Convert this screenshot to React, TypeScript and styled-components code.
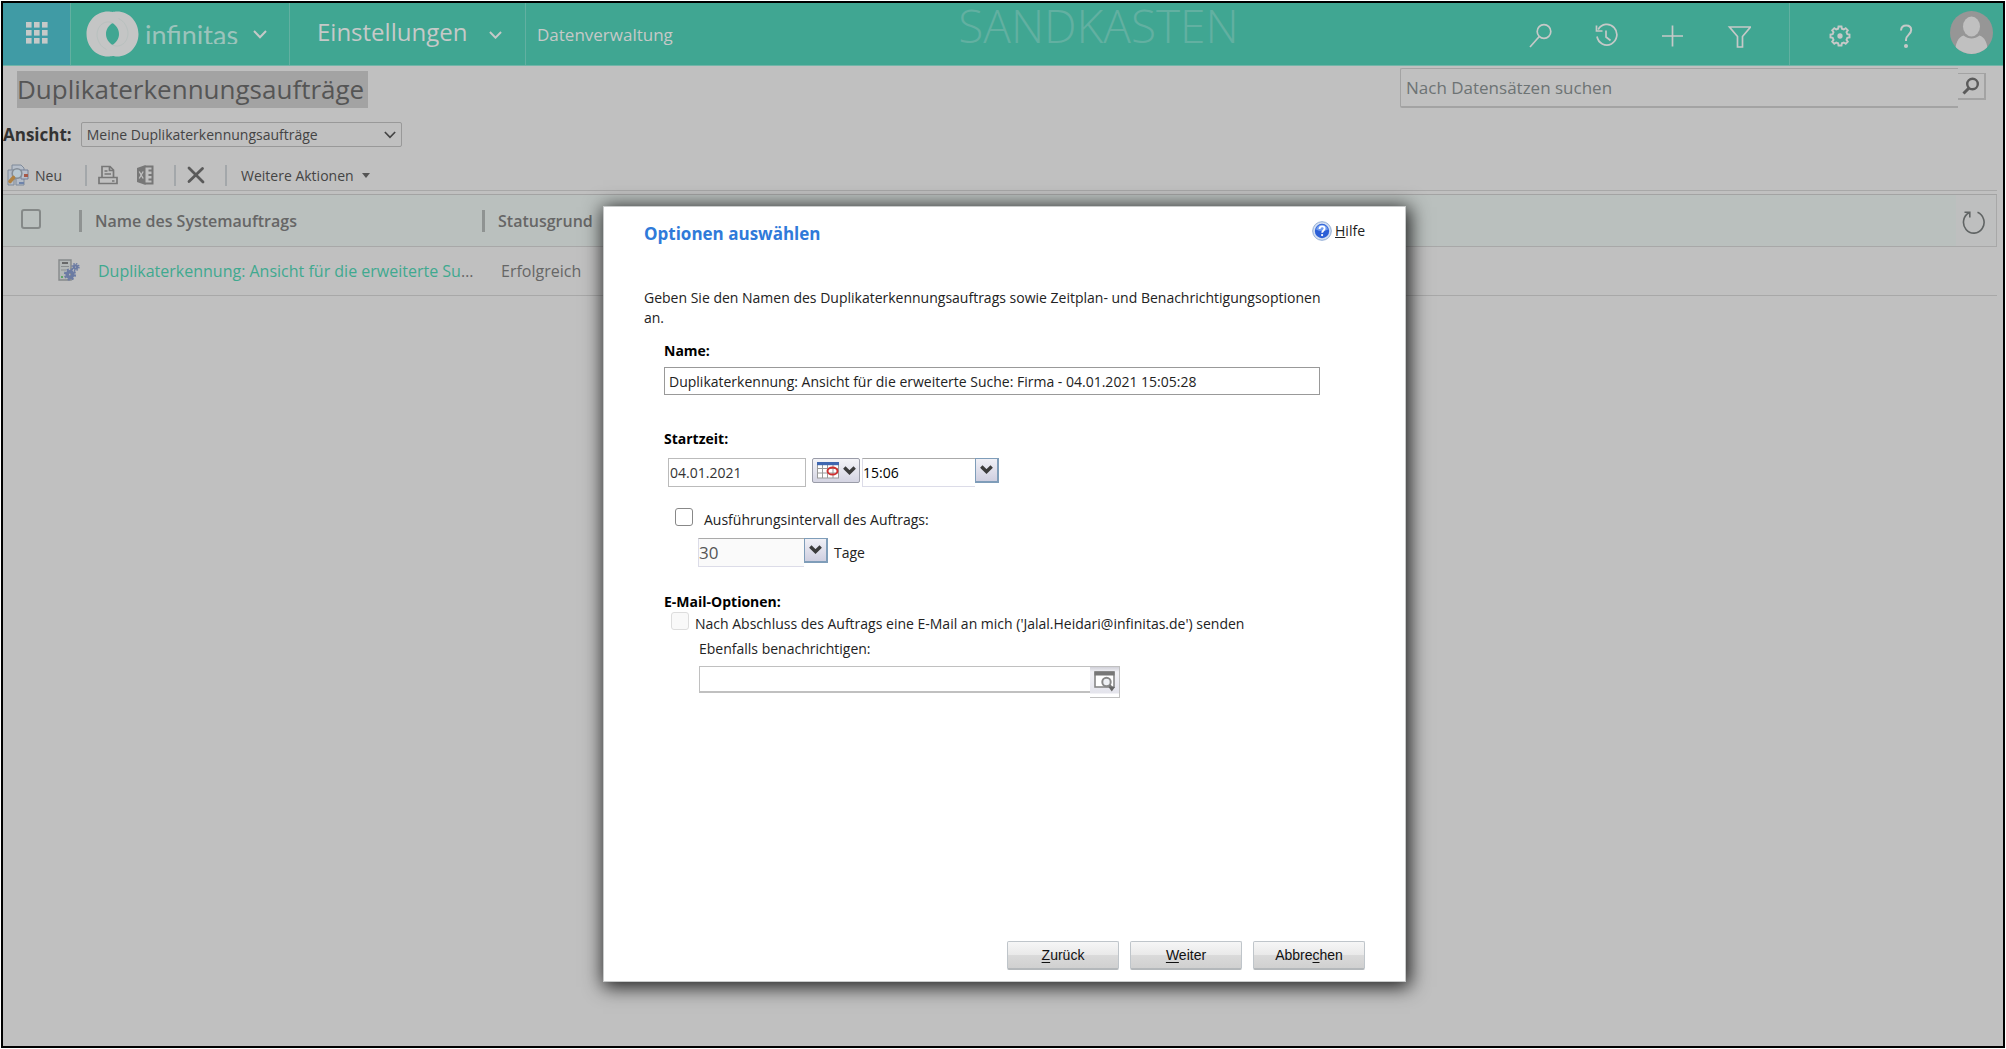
import React from 'react';
import styled, { createGlobalStyle } from 'styled-components';

const GlobalStyle = createGlobalStyle`
  *, *::before, *::after { box-sizing: border-box; }
  body { margin: 0; background: #fff; }
  body, button, input, select { font-family: "Open Sans", "Noto Sans", sans-serif; }
  button { margin: 0; padding: 0; border: 0; background: none; color: inherit; cursor: pointer; }
  svg { display: block; flex: none; }
`;

const Page = styled.div`
  padding: 1px;
`;

const Frame = styled.div`
  display: flex;
  flex-direction: column;
  min-height: calc(100vh - 2px);
  border: 2px solid #000;
  background: #c0c0c0;
  color: #444;
  font-size: 14px;
`;

/* ---------- top navigation ---------- */

const TopBar = styled.header`
  display: flex;
  height: 63px;
  border-bottom: 1px solid #72b5a8;
  background: #40a692;
  color: #c6c9c8;
`;

const WaffleButton = styled.button`
  display: flex;
  align-items: center;
  justify-content: center;
  width: 68px;
  padding-bottom: 2px;
  border-right: 1px solid #62b0a1;
  background: #409ba5;
`;

const Brand = styled.button`
  display: flex;
  align-items: center;
  gap: 6px;
  width: 219px;
  padding-left: 15px;
  border-right: 1px solid #62b0a1;
`;

const Wordmark = styled.span`
  width: 96px;
  height: 22px;
  margin-bottom: 3px;
  overflow: hidden;
  color: #9cc3bb;
  font: 400 27px/26px Lato, sans-serif;
  text-align: left;
`;

const AreaButton = styled.button`
  display: flex;
  align-items: center;
  gap: 22px;
  width: 236px;
  padding: 0 0 6px 27px;
  border-right: 1px solid #62b0a1;
  font-size: 24px;
`;

const BrandChevron = styled.span`
  padding-left: 6px;
`;

const AreaChevron = styled.span`
  padding-top: 8px;
`;

const SubArea = styled.a`
  display: flex;
  align-items: center;
  padding-left: 11px;
  color: inherit;
  font-size: 17px;
  text-decoration: none;
`;

const Sandbox = styled.div`
  flex: 1;
  padding-left: 16px;
  color: #62b0a1;
  font-size: 46px;
  font-weight: 300;
  line-height: 44px;
  text-align: center;
`;

const Tools = styled.div<{ $divided?: boolean }>`
  display: flex;
  padding: ${(p) => (p.$divided ? '0 0 0 17px' : '0 17px 0 0')};
  border-left: ${(p) => (p.$divided ? '1px solid #62b0a1' : '0')};
`;

const ToolButton = styled.button`
  display: flex;
  align-items: center;
  justify-content: center;
  width: 66px;
  padding-top: 3px;
`;

const Avatar = styled.button`
  align-self: center;
  width: 43px;
  height: 43px;
  margin: 0 10px 3px 11px;
  border-radius: 50%;
  overflow: hidden;
`;

/* ---------- list page ---------- */

const TitleRow = styled.div`
  display: flex;
  align-items: flex-start;
  justify-content: space-between;
  padding: 2px 17px 0 14px;
`;

const Title = styled.h1`
  margin: 3px 0 0;
  padding-right: 4px;
  background: #a3a3a3;
  color: #555;
  font-size: 26px;
  font-weight: 400;
  line-height: 37px;
`;

const Search = styled.form`
  display: flex;
  align-items: flex-start;
  flex: 0 1 586px;
`;

const SearchInput = styled.input`
  flex: 1;
  min-width: 0;
  height: 40px;
  padding: 0 5px;
  border: solid #a3a3a3;
  border-width: 1px 0 2px 1px;
  border-radius: 2px 0 0 2px;
  background: transparent;
  color: #6d7374;
  font-size: 17px;
  &::placeholder { color: #6d7374; opacity: 1; }
`;

const SearchButton = styled.button`
  display: flex;
  align-items: center;
  justify-content: center;
  width: 28px;
  height: 27px;
  margin-top: 5px;
  border: solid #a3a3a3;
  border-width: 1px 2px 2px 0;
`;

const ViewRow = styled.div`
  display: flex;
  align-items: center;
  gap: 9px;
  margin-top: 14px;
`;

const ViewLabel = styled.label`
  color: #333;
  font-size: 17px;
  font-weight: 700;
  line-height: 25px;
`;

const ViewPicker = styled.div`
  display: grid;
  align-items: center;
  width: 321px;
  > * { grid-area: 1 / 1; }
  > svg { justify-self: end; margin-right: 6px; pointer-events: none; }
`;

const ViewSelect = styled.select`
  appearance: none;
  width: 100%;
  height: 25px;
  padding: 0 5px;
  border: 1px solid #999;
  border-radius: 2px;
  background: transparent;
  color: #444;
  font-size: 14px;
`;

const Toolbar = styled.div`
  display: flex;
  align-items: center;
  height: 31px;
  margin: 13px 6px 3px 0;
  padding-left: 4px;
  border-bottom: 1px solid #a8a8a8;
`;

const ToolbarButton = styled.button<{ $gap?: number }>`
  display: flex;
  align-items: center;
  gap: 6px;
  margin-right: ${(p) => p.$gap || 0}px;
  color: #444;
  font-size: 14px;
`;

const Separator = styled.span<{ $after: number }>`
  width: 2px;
  height: 21px;
  margin-right: ${(p) => p.$after}px;
  background: #a3a7aa;
`;

const Caret = styled.span`
  margin-left: 2px;
  border: solid transparent;
  border-width: 5px 4px 0;
  border-top-color: #555;
`;

const Grid = styled.table`
  width: calc(100% - 6px);
  border-collapse: separate;
  border-spacing: 0;
  table-layout: fixed;
  border-top: 1px solid #a3a3a3;
  th, td { padding: 0; text-align: left; font-weight: 400; border-bottom: 1px solid #a8a8a8; }
`;

const HeadRow = styled.tr`
  height: 52px;
  background: #bac0be;
`;

const BodyRow = styled.tr`
  height: 49px;
`;

const SelectColumn = styled.col`
  width: 76px;
`;

const NameColumn = styled.col`
  width: 403px;
`;

const RefreshColumn = styled.col`
  width: 41px;
`;

const ColumnTitle = styled.span`
  display: block;
  padding-left: 13px;
  border-left: 3px solid #8f9392;
  color: #666;
  font-size: 16px;
  font-weight: 600;
  line-height: 22px;
`;

const TextCell = styled.td`
  && { padding: 0 5px 0 19px; }
  overflow: hidden;
  color: #666;
  font-size: 16px;
  text-overflow: ellipsis;
  white-space: nowrap;
`;

const RecordLink = styled.a`
  color: #3fa98f;
  text-decoration: none;
`;

const IconCell = styled.td`
  > svg { margin: 0 0 3px 55px; }
`;

const RefreshCell = styled.th`
  background: #bebfbf;
  border-right: 1px solid #a8a8a8;
`;

const RefreshButton = styled.button`
  display: block;
  margin: 2px 0 0 6px;
`;

const HeadCheck = styled.input`
  appearance: none;
  display: block;
  width: 20px;
  height: 20px;
  margin: 0 0 4px 18px;
  border: 2px solid #858988;
  border-radius: 3px;
`;

/* ---------- dialog ---------- */

const Overlay = styled.div`
  position: absolute;
  inset: 0;
  display: flex;
  align-items: flex-start;
  justify-content: center;
  padding: 206px 0 0 3px;
`;

const Dialog = styled.section`
  display: flex;
  flex-direction: column;
  width: 803px;
  min-height: 776px;
  padding: 14px 40px 11px 40px;
  border: 1px solid #c9cbcb;
  background: #fff;
  box-shadow: 2px 3px 18px 2px rgba(0, 0, 0, 0.85);
  color: #222;
  font-size: 14px;
  line-height: 20px;
`;

const DialogHead = styled.div`
  display: flex;
  align-items: flex-start;
  justify-content: space-between;
`;

const DialogTitle = styled.h2`
  margin: 0;
  color: #2f7ad9;
  font-size: 17px;
  font-weight: 700;
  line-height: 26px;
`;

const HelpLink = styled.a`
  display: flex;
  align-items: center;
  gap: 3px;
  color: #222;
  text-decoration: none;
`;

const Intro = styled.p`
  max-width: 690px;
  margin: 41px 0 0;
`;

const Fields = styled.form`
  margin: 13px 45px 0 20px;
`;

const Caption = styled.label`
  display: block;
  color: #000;
  font-weight: 700;
`;

const Group = styled.div<{ $top: number; $indent?: number }>`
  display: flex;
  margin-top: ${(p) => p.$top}px;
  padding-left: ${(p) => p.$indent || 0}px;
`;

const CenteredGroup = styled(Group)`
  align-items: center;
`;

const TextInput = styled.input`
  flex: 1;
  min-width: 0;
  height: 28px;
  padding: 0 4px;
  border: 1px solid #999;
  border-radius: 0;
  background: #fff;
  color: #222;
  font-size: 14px;
`;

const DateInput = styled.input`
  width: 138px;
  height: 29px;
  padding: 0 1px;
  border: 1px solid #bbb;
  border-radius: 0;
  color: #333;
  font-size: 14px;
`;

const CalendarButton = styled.button`
  display: flex;
  align-items: center;
  justify-content: center;
  gap: 4px;
  width: 48px;
  height: 25px;
  margin: 0 2px 0 6px;
  border: 1px solid #9a9ca8;
  border-radius: 2px;
  background: linear-gradient(#f4f4f8, #d4d4e2);
`;

const Combo = styled.div<{ $width: number }>`
  display: grid;
  width: ${(p) => p.$width}px;
  > * { grid-area: 1 / 1; }
`;

const ComboSelect = styled.select`
  appearance: none;
  width: calc(100% - 24px);
  height: 29px;
  padding: 0;
  border: solid #dcdce8;
  border-width: 1px 0 1px 1px;
  border-top-color: #aaa;
  border-radius: 0;
  background: #fff;
  color: #000;
  font-size: 14px;
  font-weight: 500;
  opacity: 1;
  &:disabled { background: #fafafa; color: #555; font-size: 17px; font-weight: 400; }
`;

const ComboArrow = styled.span`
  display: flex;
  align-items: center;
  justify-content: center;
  justify-self: end;
  width: 24px;
  height: 25px;
  border: 2px solid #7f9db9;
  border-width: 1px 2px 2px 1px;
  background: linear-gradient(#f0f0f6, #cfcfe0);
  pointer-events: none;
`;

const Unit = styled.span`
  padding-left: 6px;
`;

const Check = styled.input`
  appearance: none;
  flex: none;
  align-self: flex-start;
  width: 18px;
  height: 18px;
  margin: 0;
  border: 1px solid #888;
  border-radius: 3px;
  background: #fff;
  &:disabled { border-color: #ddd; background: #f9f9f9; }
`;

const CheckLabel = styled.label<{ $gap: number }>`
  padding: 2px 0 0 ${(p) => p.$gap}px;
  white-space: nowrap;
`;

const FieldLabel = styled.label`
  display: block;
  margin-top: 5px;
  padding-left: 35px;
`;

const LookupInput = styled.input`
  width: 391px;
  height: 27px;
  padding: 0 4px;
  border: solid #c0c0c0;
  border-width: 1px 0 2px 1px;
  border-radius: 0;
  font-size: 14px;
`;

const LookupButton = styled.button`
  display: flex;
  align-items: flex-start;
  justify-content: center;
  width: 30px;
  height: 32px;
  padding-top: 4px;
  border: solid #c0c0c0;
  border-width: 1px 1px 1px 0;
  background: linear-gradient(#d0d0d8, #f2f2f6 5px, #e4e4ec 26px, #fff 27px);
`;

const Actions = styled.div`
  display: flex;
  justify-content: flex-end;
  gap: 11px;
  margin-top: auto;
`;

const ActionButton = styled.button`
  width: 112px;
  height: 29px;
  border: 1px solid #bfc5ca;
  border-bottom: 2px solid #b4b8bb;
  border-radius: 2px;
  background: linear-gradient(#f6f6f6, #e9e9e9 50%, #dadada 51%, #d0d0d0);
  color: #111;
  font: 14px "Liberation Sans", Arial, sans-serif;
  text-underline-offset: 2px;
`;

/* ---------- icons ---------- */

const Chevron = ({ size = 14, width = 2 }: { size?: number; width?: number }) => (
  <svg width={size} height={size / 2 + 2} viewBox="0 0 14 9" fill="none" stroke="currentColor" strokeWidth={width}>
    <path d="M1 1l6 6.2L13 1" />
  </svg>
);

const BoldChevron = () => (
  <svg width="13" height="10" viewBox="0 0 13 10" fill="none" stroke="#3c3c3c" strokeWidth="3.4">
    <path d="M1.3 1.6l5.2 5 5.2-5" />
  </svg>
);

const WaffleIcon = () => (
  <svg width="22" height="22" viewBox="0 0 22 22" fill="#c6c9c8">
    {[0, 8, 16].map((y) => [0, 8, 16].map((x) => <rect key={`${x}-${y}`} x={x} y={y} width="5.6" height="5.6" />))}
  </svg>
);

const RingLogo = () => (
  <svg width="53" height="46" viewBox="0 0 53 46">
    <path
      fill="#c4c5c5"
      fillRule="evenodd"
      d="M22 .5c2 0 3.200.2 4.500.5 1.300-.3 2.500-.5 4.500-.5 12 0 21.500 10 21.500 22.500S43 45.500 31 45.500c-2 0-3.200-.2-4.500-.5-1.300.3-2.500.5-4.500.5C10 45.500.5 35.500.5 23S10 .5 22 .5zM26.500 12c-4 2.500-6.500 6.500-6.500 11s2.500 8.500 6.500 11c4-2.500 6.500-6.500 6.500-11s-2.500-8.500-6.500-11z"
    />
    <path
      d="M26.500 12c-6.500-3.500-15 1.500-15.500 11 0 7 4 13 9.500 15.500M26.500 34c6.500 3.500 15-1.500 15.500-11 0-7-4-13-9.500-15.500"
      fill="none"
      stroke="#b9c1bf"
      strokeWidth="1"
    />
  </svg>
);

const LineIcon = ({ children }: { children: React.ReactNode }) => (
  <svg width="24" height="26" viewBox="0 0 24 26" fill="none" stroke="#c6c9c8" strokeWidth="1.7">
    {children}
  </svg>
);

const SearchIcon = () => (
  <LineIcon>
    <circle cx="15" cy="8.500" r="6.800" />
    <path d="M10.300 13.500L1 24" />
  </LineIcon>
);

const HistoryIcon = () => (
  <LineIcon>
    <path d="M3.200 6.500A10 10.300 0 1 1 2 13.500" />
    <path d="M1.500 2.500v5.500h6M11 7.500v6.500l4.500 3.500" />
  </LineIcon>
);

const PlusIcon = () => (
  <LineIcon>
    <path d="M11.500 2.500v21M1 13h21" />
  </LineIcon>
);

const FilterIcon = () => (
  <LineIcon>
    <path d="M2.500 4h21l-8 9.500V24h-5V13.500z" />
  </LineIcon>
);

const GearIcon = () => (
  <LineIcon>
    <path
      d="M10.500 3.500h3l.4 2.200 1.900.8 1.900-1.300 2.100 2.100-1.300 1.900.8 1.900 2.200.4v3l-2.200.4-.8 1.900 1.300 1.900-2.100 2.100-1.900-1.300-1.900.8-.4 2.200h-3l-.4-2.200-1.900-.8-1.900 1.300-2.100-2.100 1.300-1.900-.8-1.900-2.200-.4v-3l2.200-.4.8-1.900-1.300-1.900 2.100-2.100 1.900 1.300 1.900-.8z"
      strokeWidth="1.900"
    />
    <circle cx="12" cy="13" r="1.800" fill="#c6c9c8" />
  </LineIcon>
);

const HelpIcon = () => (
  <LineIcon>
    <path d="M7 7.500c.2-3.200 2.300-5 5.200-5 3 0 5 1.800 5 4.500 0 4.500-5.200 4.800-5.200 9.800v1.200" strokeWidth="2" />
    <circle cx="12" cy="23" r="1.200" fill="#c6c9c8" />
  </LineIcon>
);

const PersonIcon = () => (
  <svg width="43" height="43" viewBox="0 0 43 43">
    <rect width="43" height="43" fill="#969696" />
    <ellipse cx="21.500" cy="15.500" rx="8.500" ry="10" fill="#c0c0c0" />
    <path d="M5 43c0-11 3.500-17 8.500-18.500 5 4 11 4 16 0C34.500 26 38 32 38 43z" fill="#c0c0c0" />
  </svg>
);

const MagnifierIcon = () => (
  <svg width="18" height="18" viewBox="0 0 18 18" fill="none" stroke="#5b5b5b" strokeWidth="2.400">
    <circle cx="10.500" cy="7" r="5.300" />
    <path d="M7 11L1.500 16.500" strokeWidth="3" />
  </svg>
);

const NewJobIcon = () => (
  <svg width="22" height="22" viewBox="0 0 22 22">
    <path d="M5 1h9l3 3v11H5z" fill="#b7bfca" stroke="#7f8a9a" />
    <path d="M1 6h6v15H1zM9 12h8v9H9z" fill="#b4bcc8" stroke="#7f8a9a" />
    <path d="M14 6h7v9h-7z" fill="#b9c0cb" stroke="#74809a" />
    <path d="M17 10h4v3h-4z" fill="#a65a4a" />
    <path d="M12 18h5v2h-5z" fill="#6f84ab" />
    <circle cx="10" cy="9.500" r="4.800" fill="#b8c8d2" stroke="#858d96" strokeWidth="1.600" />
    <path d="M6.500 13.500L3 17.500" stroke="#b08243" strokeWidth="3.600" strokeLinecap="round" />
  </svg>
);

const PrintIcon = () => (
  <svg width="20" height="20" viewBox="0 0 20 20" fill="none" stroke="#777" strokeWidth="1.700">
    <path d="M4 12V1.500h8l3.500 3.500v7M1 12.500h18v6H1zM11.500 2v3.500H15M6.500 6h3M6.500 9h6.500M14 16h2.500" />
  </svg>
);

const ExcelIcon = () => (
  <svg width="18" height="20" viewBox="0 0 18 20">
    <path d="M9 1.500h7.500v17H9" fill="none" stroke="#777" strokeWidth="2" />
    <path d="M12.500 5.500h4M12.500 10h4M12.500 14.500h4" stroke="#777" strokeWidth="2" />
    <path d="M9.500 0v20L1 17V3z" fill="#777" />
    <path d="M3.200 6.500l4 7M7.200 6.500l-4 7" stroke="#c0c0c0" strokeWidth="1.300" />
  </svg>
);

const DeleteIcon = () => (
  <svg width="18" height="18" viewBox="0 0 18 18" stroke="#5a5a5a" strokeWidth="2.800" strokeLinecap="round">
    <path d="M2 2l14 14M15.500 2.500L2 15.500" />
  </svg>
);

const JobIcon = () => (
  <svg width="22" height="22" viewBox="0 0 22 22">
    <path d="M1 1h12v20H1z" fill="#b4b9b8" stroke="#85898a" strokeWidth="1.400" />
    <path d="M4 4h6" stroke="#555" strokeWidth="1.600" />
    <path d="M3 7.500h8M3 11h5" stroke="#8b8f90" strokeWidth="1.200" />
    <path d="M3 18h2" stroke="#5da568" strokeWidth="2" />
    <circle cx="12" cy="15.500" r="2.800" fill="none" stroke="#6b7ba3" strokeWidth="3.400" />
    <circle cx="12" cy="15.500" r="5.100" fill="none" stroke="#6b7ba3" strokeWidth="2" strokeDasharray="2.200 1.800" />
    <circle cx="17.500" cy="8" r="1.700" fill="none" stroke="#6b7ba3" strokeWidth="2.200" />
    <circle cx="17.500" cy="8" r="3.400" fill="none" stroke="#6b7ba3" strokeWidth="1.500" strokeDasharray="1.500 1.170" />
  </svg>
);

const RefreshIcon = () => (
  <svg width="24" height="26" viewBox="0 0 24 26" fill="none" stroke="#606464" strokeWidth="1.600">
    <path d="M15.500 3.300A10.300 10.800 0 1 1 7 3.800M2.500 3.200h5.300v5.300" />
  </svg>
);

const HelpBadge = () => (
  <svg width="20" height="20" viewBox="0 0 20 20">
    <circle cx="10" cy="10" r="9.300" fill="#d4e0f2" stroke="#93add4" />
    <circle cx="10" cy="10" r="7.200" fill="#2c5fd6" />
    <path d="M4 8.500a6.200 6.200 0 0 1 12 0c-4 2-8 2-12 0z" fill="#6f9bf0" />
    <path d="M7.500 8c.1-1.800 1.100-2.600 2.600-2.600s2.500.9 2.500 2.200c0 1.900-2.400 2-2.400 4.100" fill="none" stroke="#fff" strokeWidth="1.900" />
    <circle cx="10.100" cy="14.100" r="1.100" fill="#fff" />
  </svg>
);

const CalendarIcon = () => (
  <svg width="22" height="17" viewBox="0 0 22 17">
    <rect x=".5" y=".5" width="21" height="15.500" fill="#fff" stroke="#999" />
    <path d="M0 6.500h22M0 11h22M5.500 3v13M10.500 3v13M16 3v13" stroke="#999" />
    <rect width="22" height="3.200" fill="#3f66b0" />
    <ellipse cx="15.500" cy="9" rx="5" ry="3.600" fill="none" stroke="#cf2f2f" strokeWidth="2" />
  </svg>
);

const LookupIcon = () => (
  <svg width="22" height="21" viewBox="0 0 22 21">
    <rect x="1" y="1" width="19" height="15" fill="#fff" stroke="#888" strokeWidth="1.600" />
    <rect x="0.500" y=".5" width="20" height="4" fill="#777" />
    <circle cx="12.500" cy="11" r="4.200" fill="#eef0f4" stroke="#888" strokeWidth="2" />
    <path d="M15.500 14.500l2 2" stroke="#777" strokeWidth="2.600" />
    <path d="M14.500 16h6.500l-3.200 4.500z" fill="#666" />
  </svg>
);

const RECORD = 'Duplikaterkennung: Ansicht für die erweiterte Suche: Firma - 04.01.2021 15:05:28';

export default function App() {
  return (
    <Page>
      <GlobalStyle />
      <Frame>
        <TopBar>
          <WaffleButton aria-label="Apps"><WaffleIcon /></WaffleButton>
          <Brand>
            <RingLogo />
            <Wordmark>infinitas</Wordmark>
            <BrandChevron><Chevron /></BrandChevron>
          </Brand>
          <AreaButton>
            Einstellungen
            <AreaChevron><Chevron size={13} /></AreaChevron>
          </AreaButton>
          <SubArea href="#datenverwaltung">Datenverwaltung</SubArea>
          <Sandbox>SANDKASTEN</Sandbox>
          <Tools>
            <ToolButton aria-label="Suchen"><SearchIcon /></ToolButton>
            <ToolButton aria-label="Verlauf"><HistoryIcon /></ToolButton>
            <ToolButton aria-label="Erstellen"><PlusIcon /></ToolButton>
            <ToolButton aria-label="Filtern"><FilterIcon /></ToolButton>
          </Tools>
          <Tools $divided>
            <ToolButton aria-label="Optionen"><GearIcon /></ToolButton>
            <ToolButton aria-label="Hilfe"><HelpIcon /></ToolButton>
            <Avatar aria-label="Profil"><PersonIcon /></Avatar>
          </Tools>
        </TopBar>

        <main>
          <TitleRow>
            <Title>Duplikaterkennungsaufträge</Title>
            <Search>
              <SearchInput aria-label="Nach Datensätzen suchen" placeholder="Nach Datensätzen suchen" />
              <SearchButton type="button" aria-label="Suche starten"><MagnifierIcon /></SearchButton>
            </Search>
          </TitleRow>

          <ViewRow>
            <ViewLabel htmlFor="view">Ansicht:</ViewLabel>
            <ViewPicker>
              <ViewSelect id="view"><option>Meine Duplikaterkennungsaufträge</option></ViewSelect>
              <Chevron size={12} />
            </ViewPicker>
          </ViewRow>

          <Toolbar>
            <ToolbarButton $gap={23}><NewJobIcon />Neu</ToolbarButton>
            <Separator $after={11} />
            <ToolbarButton $gap={18} aria-label="Drucken"><PrintIcon /></ToolbarButton>
            <ToolbarButton $gap={20} aria-label="Nach Excel exportieren"><ExcelIcon /></ToolbarButton>
            <Separator $after={11} />
            <ToolbarButton $gap={20} aria-label="Löschen"><DeleteIcon /></ToolbarButton>
            <Separator $after={14} />
            <ToolbarButton>Weitere Aktionen<Caret /></ToolbarButton>
          </Toolbar>

          <Grid>
            <colgroup><SelectColumn /><NameColumn /><col /><RefreshColumn /></colgroup>
            <thead>
              <HeadRow>
                <th><HeadCheck type="checkbox" aria-label="Alle auswählen" /></th>
                <th><ColumnTitle>Name des Systemauftrags</ColumnTitle></th>
                <th><ColumnTitle>Statusgrund</ColumnTitle></th>
                <RefreshCell><RefreshButton aria-label="Aktualisieren"><RefreshIcon /></RefreshButton></RefreshCell>
              </HeadRow>
            </thead>
            <tbody>
              <BodyRow>
                <IconCell><JobIcon /></IconCell>
                <TextCell><RecordLink href="#auftrag">{RECORD}</RecordLink></TextCell>
                <TextCell colSpan={2}>Erfolgreich</TextCell>
              </BodyRow>
            </tbody>
          </Grid>
        </main>
      </Frame>

      <Overlay>
        <Dialog role="dialog" aria-modal="true" aria-labelledby="dialog-title">
          <DialogHead>
            <DialogTitle id="dialog-title">Optionen auswählen</DialogTitle>
            <HelpLink href="#hilfe"><HelpBadge /><span><u>H</u>ilfe</span></HelpLink>
          </DialogHead>
          <Intro>
            Geben Sie den Namen des Duplikaterkennungsauftrags sowie Zeitplan- und Benachrichtigungsoptionen an.
          </Intro>
          <Fields>
            <Caption htmlFor="job-name">Name:</Caption>
            <Group $top={6}>
              <TextInput id="job-name" defaultValue={RECORD} />
            </Group>

            <Group $top={34}><Caption htmlFor="start-date">Startzeit:</Caption></Group>
            <Group $top={9} $indent={4}>
              <DateInput id="start-date" defaultValue="04.01.2021" />
              <CalendarButton type="button" aria-label="Datum auswählen"><CalendarIcon /><BoldChevron /></CalendarButton>
              <Combo $width={137}>
                <ComboSelect aria-label="Uhrzeit"><option>15:06</option></ComboSelect>
                <ComboArrow><BoldChevron /></ComboArrow>
              </Combo>
            </Group>

            <Group $top={21} $indent={11}>
              <Check type="checkbox" id="repeat" />
              <CheckLabel htmlFor="repeat" $gap={11}>Ausführungsintervall des Auftrags:</CheckLabel>
            </Group>
            <CenteredGroup $top={8} $indent={34}>
              <Combo $width={130}>
                <ComboSelect id="days" aria-label="Intervall in Tagen" disabled><option>30</option></ComboSelect>
                <ComboArrow><BoldChevron /></ComboArrow>
              </Combo>
              <Unit>Tage</Unit>
            </CenteredGroup>

            <Group $top={25}><Caption as="span">E-Mail-Optionen:</Caption></Group>
            <Group $top={0} $indent={7}>
              <Check type="checkbox" id="notify" disabled />
              <CheckLabel htmlFor="notify" $gap={6}>
                Nach Abschluss des Auftrags eine E-Mail an mich ('Jalal.Heidari@infinitas.de') senden
              </CheckLabel>
            </Group>
            <FieldLabel htmlFor="also">Ebenfalls benachrichtigen:</FieldLabel>
            <Group $top={7} $indent={35}>
              <LookupInput id="also" />
              <LookupButton type="button" aria-label="Nachschlagen"><LookupIcon /></LookupButton>
            </Group>
          </Fields>
          <Actions>
            <ActionButton><u>Z</u>urück</ActionButton>
            <ActionButton><u>W</u>eiter</ActionButton>
            <ActionButton>Abbre<u>c</u>hen</ActionButton>
          </Actions>
        </Dialog>
      </Overlay>
    </Page>
  );
}
